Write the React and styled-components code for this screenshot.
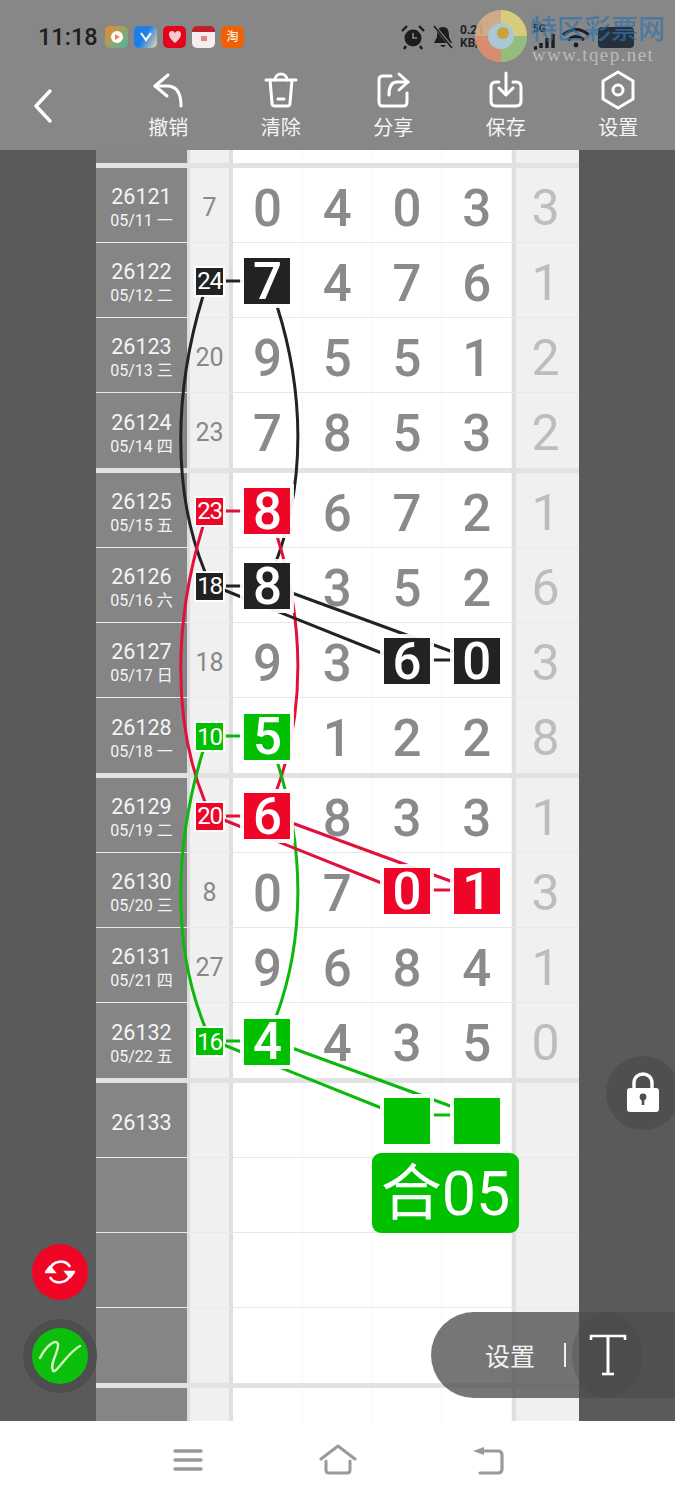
import React from 'react'
import styled, { createGlobalStyle } from 'styled-components'

const CJK = '"Noto Sans CJK SC", Roboto, sans-serif'
const COLORS = { black: '#222222', red: '#ee0527', green: '#00c000' }
const LINE_COLORS = { black: '#222222', red: '#e0123a', green: '#0cb80c' }

const Global = createGlobalStyle`
  html, body { margin: 0; padding: 0; background: #5a5a5a; }
  * { box-sizing: border-box; }
`

const Page = styled.div`
  position: relative;
  width: 675px;
  height: 1500px;
  overflow: hidden;
  display: flex;
  flex-direction: column;
  font-family: Roboto, ${CJK};
`

const Header = styled.header`
  height: 150px;
  flex: none;
  background: #878787;
  display: flex;
  flex-direction: column;
`

const StatusBar = styled.div`
  height: 70px;
  padding: 22px 0 0 38px;
  display: flex;
  align-items: flex-start;
`

const Clock = styled.span`
  font-size: 23.5px;
  line-height: 30px;
  font-weight: 500;
  color: #1d1d1d;
  width: 67px;
`

const AppIcons = styled.div`
  display: flex;
  gap: 6px;
  margin-top: 4px;
`

const AppIcon = styled.span`
  width: 23px;
  height: 22px;
  border-radius: 5px;
  background: ${p => p.$bg};
  display: flex;
  align-items: center;
  justify-content: center;
  font-size: 12px;
  line-height: 1;
  color: #fff;
`

const StatusRight = styled.div`
  margin-left: 156px;
  display: flex;
  align-items: center;
  gap: 5px;
  margin-top: 2px;
`

const Speed = styled.span`
  font-size: 12px;
  line-height: 13px;
  font-weight: 700;
  color: #222;
  width: 32px;
`

const SignalIcons = styled.svg`
  margin-left: 36px;
`

const Battery = styled.span`
  width: 36px;
  height: 21px;
  border-radius: 4px;
  background: #26303c;
  margin-left: -2px;
`

const Watermark = styled.div`
  position: absolute;
  left: 530px;
  top: 13px;
  width: 140px;
  z-index: 5;
`

const WatermarkTitle = styled.div`
  font-family: ${CJK};
  font-size: 27px;
  line-height: 30px;
  font-weight: 500;
  color: rgba(50, 115, 170, 0.7);
  white-space: nowrap;
`

const WatermarkUrl = styled.div`
  font-family: "Liberation Serif", serif;
  font-size: 19px;
  line-height: 20px;
  letter-spacing: 1.4px;
  color: rgba(205, 205, 205, 0.75);
  margin-top: 2px;
  white-space: nowrap;
  margin-left: 2px;
`

const Swirl = styled.svg`
  position: absolute;
  left: 473px;
  top: 9px;
  z-index: 4;
`

const Toolbar = styled.div`
  flex: 1;
  display: flex;
  padding-left: 112px;
`

const BackButton = styled.svg`
  position: absolute;
  left: 30px;
  top: 88px;
`

const Tool = styled.div`
  width: 112.5px;
  display: flex;
  flex-direction: column;
  align-items: center;
  color: #fff;
`

const ToolLabel = styled.span`
  font-family: ${CJK};
  font-size: 20px;
  line-height: 24px;
  margin-top: 5px;
  color: #f4f4f4;
`

const Main = styled.main`
  height: 1271px;
  flex: none;
  display: flex;
  background: #5a5a5a;
  padding: 0 96px;
`

const Sheet = styled.div`
  position: relative;
  width: 483px;
  height: 1271px;
  overflow: hidden;
  background: #fff;
`

const Lines = styled.svg`
  position: absolute;
  inset: 0;
  z-index: 1;
  pointer-events: none;
`

const Row = styled.div`
  display: grid;
  grid-template-columns: 94px 43px repeat(4, 69.75px) 67px;
  height: ${p => p.$h}px;
  border-bottom: ${p => p.$sep ? '5px solid #e2e2e2' : '1.5px solid #e8e8e8'};
`

const LabelCell = styled.div`
  background: #858585;
  border-right: 3px solid #dcdcdc;
  color: #f4f4f4;
  display: flex;
  flex-direction: column;
  align-items: center;
  justify-content: center;
  padding-top: 6px;
`

const Issue = styled.span`
  font-size: 21.5px;
  line-height: 26px;
`

const IssueDate = styled.span`
  font-family: Roboto, ${CJK};
  font-size: 16px;
  line-height: 22px;
`

const MissCell = styled.div`
  background: #f0f0f0;
  border-right: 4px solid #dfdfdf;
  display: flex;
  align-items: center;
  justify-content: center;
  font-size: 25px;
  color: #888;
  padding-top: 2px;
`

const MissText = styled.span`
  padding-top: 2px;
`

const Badge = styled.span`
  position: relative;
  z-index: 2;
  width: 27px;
  height: 27px;
  background: ${p => COLORS[p.$color]};
  box-shadow: 0 0 0 2px rgba(255, 255, 255, 0.9);
  color: #fff;
  display: flex;
  align-items: center;
  justify-content: center;
  letter-spacing: -1.2px;
  font-size: 24px;
`

const NumCell = styled.div`
  border-right: 1.5px solid #f6f6f6;
  display: flex;
  align-items: center;
  justify-content: center;
  font-size: 51px;
  font-weight: 500;
  color: #8a8a8a;
  padding-top: 2px;
`

const Digit = styled.span`
  padding-top: 4px;
`

const Square = styled.span`
  position: relative;
  z-index: 2;
  width: 46px;
  height: 46px;
  background: ${p => COLORS[p.$color]};
  box-shadow: 0 0 0 4px rgba(255, 255, 255, 0.92);
  color: #fff;
  display: flex;
  align-items: center;
  justify-content: center;
  font-weight: 500;
  font-size: 51px;
`

const TailCell = styled.div`
  background: #f0f0f0;
  border-left: 4px solid #dfdfdf;
  display: flex;
  align-items: center;
  justify-content: center;
  font-size: 50px;
  color: #bdbdbd;
  padding: 5px 4px 0 0;
`

const SumTag = styled.div`
  position: absolute;
  left: 276px;
  top: 1003px;
  width: 147px;
  height: 80px;
  z-index: 3;
  border-radius: 9px;
  background: ${COLORS.green};
  color: #fff;
  font-size: 61px;
  font-family: Roboto, ${CJK};
  display: flex;
  align-items: center;
  justify-content: center;
  white-space: nowrap;
  padding-bottom: 10px;
`

const RoundButton = styled.div`
  position: absolute;
  left: 32px;
  top: ${p => p.$top}px;
  width: 56px;
  height: 56px;
  border-radius: 50%;
  background: ${p => p.$bg};
  box-shadow: ${p => p.$ring ? '0 0 0 9px #4e4e4e' : 'none'};
  display: flex;
  align-items: center;
  justify-content: center;
  z-index: 6;
`

const LockButton = styled.div`
  position: absolute;
  left: 606px;
  top: 1056px;
  width: 74px;
  height: 74px;
  border-radius: 50%;
  background: #4f4f4f;
  display: flex;
  align-items: center;
  justify-content: center;
  z-index: 6;
`

const FontPill = styled.div`
  position: absolute;
  left: 431px;
  top: 1312px;
  width: 260px;
  height: 86px;
  border-radius: 43px 0 0 43px;
  background: rgba(77, 77, 77, 0.77);
  display: flex;
  align-items: center;
  padding-left: 54px;
  z-index: 6;
`

const PillLabel = styled.span`
  font-family: ${CJK};
  font-size: 25px;
  color: #f2f2f2;
  width: 79px;
`

const PillDivider = styled.span`
  width: 2px;
  height: 24px;
  background: #eee;
`

const PillIcon = styled.div`
  width: 70px;
  height: 86px;
  margin-left: 6px;
  border-radius: 35px / 43px;
  background: rgba(70, 70, 70, 0.3);
  display: flex;
  align-items: center;
  padding-left: 17px;
`

const NavBar = styled.nav`
  flex: 1;
  background: #fff;
  display: grid;
  grid-template-columns: repeat(3, 150px);
  justify-content: center;
  justify-items: center;
  align-items: center;
  padding-bottom: 2px;
`

const rows = [
  { no: '26121', date: '05/11 一', miss: '7', nums: '0403', tail: '3' },
  { no: '26122', date: '05/12 二', miss: '24', nums: '7476', tail: '1', badge: 'black', marks: { 0: 'black' } },
  { no: '26123', date: '05/13 三', miss: '20', nums: '9551', tail: '2' },
  { no: '26124', date: '05/14 四', miss: '23', nums: '7853', tail: '2', sep: true },
  { no: '26125', date: '05/15 五', miss: '23', nums: '8672', tail: '1', badge: 'red', marks: { 0: 'red' } },
  { no: '26126', date: '05/16 六', miss: '18', nums: '8352', tail: '6', badge: 'black', marks: { 0: 'black' } },
  { no: '26127', date: '05/17 日', miss: '18', nums: '9360', tail: '3', marks: { 2: 'black', 3: 'black' } },
  { no: '26128', date: '05/18 一', miss: '10', nums: '5122', tail: '8', badge: 'green', marks: { 0: 'green' }, sep: true },
  { no: '26129', date: '05/19 二', miss: '20', nums: '6833', tail: '1', badge: 'red', marks: { 0: 'red' } },
  { no: '26130', date: '05/20 三', miss: '8', nums: '0701', tail: '3', marks: { 2: 'red', 3: 'red' } },
  { no: '26131', date: '05/21 四', miss: '27', nums: '9684', tail: '1' },
  { no: '26132', date: '05/22 五', miss: '16', nums: '4435', tail: '0', badge: 'green', marks: { 0: 'green' }, sep: true },
  { no: '26133', nums: '', marks: { 2: 'green', 3: 'green' } },
  { nums: '' },
  { nums: '' },
  { nums: '', sep: true },
  { nums: '' },
]

// one connected group of marks: badge, first column square and the two curves
function Links({ color, y }) {
  const c = LINE_COLORS[color]
  return (
    <g stroke={c} strokeWidth="3" fill="none">
      <path d={`M226 ${y} H243`} />
      <path d={`M203 ${y + 15} C174 ${y + 110} 172 ${y + 210} 205 ${y + 291}`} />
      <path d={`M277 ${y + 25} C304 ${y + 110} 306 ${y + 200} 276 ${y + 281}`} />
    </g>
  )
}

function Diagonals({ color, y }) {
  const c = LINE_COLORS[color]
  return (
    <g stroke={c} strokeWidth="3" fill="none">
      <path d={`M226 ${y} H243`} />
      <path d={`M224 ${y + 4} L384 ${y + 68}`} />
      <path d={`M292 ${y + 7} L453 ${y + 66}`} />
      <path d={`M432 ${y + 74} H453`} />
    </g>
  )
}

function ChartLines() {
  return (
    <Lines width="483" height="1271" viewBox="96 150 483 1271">
      <Links color="black" y={281} />
      <Links color="red" y={511} />
      <Links color="green" y={736} />
      <Diagonals color="black" y={586} />
      <Diagonals color="red" y={816} />
      <Diagonals color="green" y={1041} />
    </Lines>
  )
}

function SheetRow({ row, h }) {
  const marks = row.marks || {}
  return (
    <Row $h={h} $sep={row.sep}>
      <LabelCell>
        {row.no && <Issue>{row.no}</Issue>}
        {row.date && <IssueDate>{row.date}</IssueDate>}
      </LabelCell>
      <MissCell>
        {row.badge ? <Badge $color={row.badge}>{row.miss}</Badge> : <MissText>{row.miss}</MissText>}
      </MissCell>
      {[0, 1, 2, 3].map(i => (
        <NumCell key={i}>
          {marks[i] ? <Square $color={marks[i]}>{row.nums[i]}</Square> : <Digit>{row.nums[i]}</Digit>}
        </NumCell>
      ))}
      <TailCell>{row.tail}</TailCell>
    </Row>
  )
}

const stroke = { stroke: '#fff', strokeWidth: 3, fill: 'none', strokeLinecap: 'round', strokeLinejoin: 'round' }

const tools = [
  {
    label: '撤销',
    icon: <><path d="M18 5 L5 16 L17 26" /><path d="M5 16 H17 C26 16 31 22 31 36" /></>,
  },
  {
    label: '清除',
    icon: <><path d="M3 10 H33" /><path d="M12 10 C12 2 24 2 24 10" /><path d="M7 10 L9 33 Q9 36 12 36 H24 Q27 36 27 33 L29 10" /><path d="M15 29 H21" /></>,
  },
  {
    label: '分享',
    icon: <><path d="M16 6 H8 Q4 6 4 10 V32 Q4 36 8 36 H28 Q32 36 32 32 V23" /><path d="M24 4 L33 12 L24 20" /><path d="M33 12 H22 Q14 12 14 25" /></>,
  },
  {
    label: '保存',
    icon: <><path d="M11 12 H8 Q3 12 3 17 V31 Q3 36 8 36 H28 Q33 36 33 31 V17 Q33 12 28 12 H25" /><path d="M18 3 V24" /><path d="M11 18 L18 25 L25 18" /></>,
  },
  {
    label: '设置',
    icon: <><path d="M18 2 L33 11 V29 L18 38 L3 29 V11 Z" /><circle cx="18" cy="20" r="5" /></>,
  },
]

export default function App() {
  return (
    <Page>
      <Global />
      <Header>
        <StatusBar>
          <Clock>11:18</Clock>
          <AppIcons>
            <AppIcon $bg="linear-gradient(135deg,#ee8a2c,#4db6a0)">
              <svg width="14" height="14" viewBox="0 0 14 14"><circle cx="7" cy="7" r="6" fill="#fff" /><path d="M5 4 L10 7 L5 10Z" fill="#ee8a2c" /></svg>
            </AppIcon>
            <AppIcon $bg="linear-gradient(120deg,#1c7fe8 45%,#f0d9a8)">
              <svg width="14" height="14" viewBox="0 0 14 14"><path d="M2 3 L7 10 L12 3" stroke="#fff" strokeWidth="2" fill="none" /></svg>
            </AppIcon>
            <AppIcon $bg="#e0061c">
              <svg width="16" height="16" viewBox="0 0 16 16"><path d="M8 14 C0 8 1 2 5 2 Q7 2 8 4 Q9 2 11 2 C15 2 16 8 8 14Z" fill="#f7c9d0" /></svg>
            </AppIcon>
            <AppIcon $bg="linear-gradient(#c0202a 28%,#f5eeee 28%)">
              <svg width="12" height="12" viewBox="0 0 12 12"><rect x="3" y="5" width="6" height="5" fill="#d88" /></svg>
            </AppIcon>
            <AppIcon $bg="#ee6205">淘</AppIcon>
          </AppIcons>
          <StatusRight>
            <svg width="26" height="26" viewBox="0 0 26 26">
              <circle cx="13" cy="14" r="8.5" fill="#1c1c1c" />
              <path d="M13 9 V14 H17" stroke="#888" strokeWidth="1.6" fill="none" />
              <path d="M2 7 L7 2 M24 7 L19 2 M6 22 L4 25 M20 22 L22 25" stroke="#1c1c1c" strokeWidth="2.4" />
            </svg>
            <svg width="24" height="26" viewBox="0 0 24 26">
              <path d="M12 3 C6 3 6 9 6 13 L3 19 H21 L18 13 C18 9 18 3 12 3Z" fill="#1c1c1c" />
              <path d="M9 21 Q12 25 15 21" fill="#1c1c1c" />
              <path d="M4 3 L21 23" stroke="#888" strokeWidth="3" />
              <path d="M3 2 L21 24" stroke="#1c1c1c" strokeWidth="1.6" />
            </svg>
            <Speed>0.21<br />KB/s</Speed>
            <SignalIcons width="62" height="26" viewBox="0 0 62 26">
              <text x="0" y="8" fontSize="10" fontWeight="700" fill="#222">5G</text>
              <path d="M1 24 H4 M8 24 V19 M14 24 V14 M20 24 V10" stroke="#1c1c1c" strokeWidth="3.4" fill="none" />
              <path d="M30 11 Q43 0 56 11 M35 16 Q43 9 51 16" stroke="#1c1c1c" strokeWidth="3" fill="none" />
              <circle cx="43" cy="21" r="2.4" fill="#1c1c1c" />
            </SignalIcons>
            <Battery />
          </StatusRight>
        </StatusBar>
        <Swirl width="56" height="54" viewBox="0 0 56 54">
          <ellipse cx="28" cy="27" rx="26" ry="26" fill="#d9b18a" opacity="0.85" />
          <path d="M28 1 A26 26 0 0 1 54 27 L40 27 A12 12 0 0 0 28 15Z" fill="#d7cf7a" opacity="0.9" />
          <path d="M2 27 A26 26 0 0 0 28 53 L28 40 A13 13 0 0 1 15 27Z" fill="#d98a6e" opacity="0.9" />
          <path d="M54 27 A26 26 0 0 1 28 53 L28 40 A13 13 0 0 0 41 27Z" fill="#8ebf7c" opacity="0.9" />
          <circle cx="28" cy="27" r="13" fill="#a9c7d4" />
          <circle cx="30" cy="24" r="6" fill="#caa23c" />
        </Swirl>
        <Watermark>
          <WatermarkTitle>特区彩票网</WatermarkTitle>
          <WatermarkUrl>www.tqep.net</WatermarkUrl>
        </Watermark>
        <BackButton width="30" height="36" viewBox="0 0 30 36">
          <path d="M20 3 L6 18 L20 33" {...stroke} strokeWidth="3.4" />
        </BackButton>
        <Toolbar>
          {tools.map(t => (
            <Tool key={t.label}>
              <svg width="36" height="40" viewBox="0 0 36 40" {...stroke}>{t.icon}</svg>
              <ToolLabel>{t.label}</ToolLabel>
            </Tool>
          ))}
        </Toolbar>
      </Header>
      <Main>
        <Sheet>
          <ChartLines />
          <SheetRow row={{ nums: '', sep: true }} h={18} />
          {rows.map((row, i) => (
            <SheetRow key={i} row={row} h={row.sep ? 80 : 75} />
          ))}
          <SumTag>合05</SumTag>
        </Sheet>
      </Main>
      <NavBar>
        <svg width="30" height="24" viewBox="0 0 30 24">
          <path d="M2 3 H28 M2 12 H28 M2 21 H28" stroke="#9a9a9a" strokeWidth="3.4" strokeLinecap="round" />
        </svg>
        <svg width="38" height="32" viewBox="0 0 38 32">
          <path d="M2 15 L19 2 L36 15" stroke="#9a9a9a" strokeWidth="3" fill="none" strokeLinecap="round" strokeLinejoin="round" />
          <path d="M7 17 V26 Q7 29 10 29 H28 Q31 29 31 26 V17" stroke="#9a9a9a" strokeWidth="3" fill="none" strokeLinecap="round" />
        </svg>
        <svg width="34" height="30" viewBox="0 0 34 30">
          <path d="M2 6 L13 2 V10Z" fill="#9a9a9a" />
          <path d="M10 6 H27 Q31 6 31 10 V24 Q31 28 27 28 H9" stroke="#9a9a9a" strokeWidth="3.2" fill="none" strokeLinecap="round" />
        </svg>
      </NavBar>

      <LockButton>
        <svg width="34" height="42" viewBox="0 0 34 42">
          <path d="M8 18 V11 C8 -1 26 -1 26 11 V18" stroke="#fff" strokeWidth="3.4" fill="none" />
          <rect x="1" y="16" width="32" height="24" rx="3" fill="#fff" />
          <circle cx="17" cy="25" r="3.4" fill="#4f4f4f" />
          <path d="M17 26 V33" stroke="#4f4f4f" strokeWidth="2.6" />
        </svg>
      </LockButton>
      <RoundButton $top={1244} $bg="#f00524">
        <svg width="30" height="30" viewBox="0 0 30 30" fill="none" stroke="#fff" strokeWidth="2.6">
          <path d="M5 13 C7 3 21 2 25 10" />
          <path d="M25 17 C23 27 9 28 5 20" />
          <path d="M1 15 L5 10 L9 15Z" fill="#fff" />
          <path d="M21 15 L25 20 L29 15Z" fill="#fff" />
        </svg>
      </RoundButton>
      <RoundButton $top={1328} $bg="#0cbf0c" $ring>
        <svg width="44" height="44" viewBox="0 0 44 44" fill="none" stroke="#d8f5c0" strokeWidth="2.4" strokeLinecap="round">
          <path d="M2 24 C8 12 18 4 20 10 C21 18 11 30 15 37 C18 40 30 18 42 12" />
        </svg>
      </RoundButton>
      <FontPill>
        <PillLabel>设置</PillLabel>
        <PillDivider />
        <PillIcon>
          <svg width="38" height="42" viewBox="0 0 38 42" fill="none" stroke="#fff" strokeWidth="2.6">
            <path d="M2 6 V2 H36 V6" />
            <path d="M19 2 V39" strokeWidth="3" />
            <path d="M13 40 H25" />
          </svg>
        </PillIcon>
      </FontPill>
    </Page>
  )
}
